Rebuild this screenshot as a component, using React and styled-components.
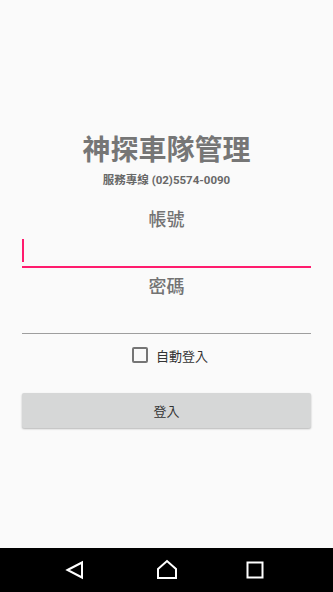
import React from "react";
import styled, { createGlobalStyle } from "styled-components";

const Global = createGlobalStyle`
  html, body { margin: 0; padding: 0; background: #fafafa; }
  body { font-family: Roboto, "Noto Sans CJK TC", "Noto Sans", sans-serif; }
  * { box-sizing: border-box; }
`;

const Screen = styled.div`
  width: 333px;
  height: 592px;
  display: flex;
  flex-direction: column;
  background: #fafafa;
`;

const Main = styled.main`
  flex: 1;
  display: flex;
  flex-direction: column;
  align-items: stretch;
  padding: 134px 22px 0 22px;
`;

const Title = styled.h1`
  margin: 0;
  text-align: center;
  font-family: Roboto, "Noto Sans CJK TC", sans-serif;
  font-size: 28px;
  line-height: 34px;
  font-weight: 700;
  color: #767676;
`;

const Subtitle = styled.div`
  margin-top: 4px;
  text-align: center;
  font-family: Roboto, "Noto Sans CJK TC", sans-serif;
  font-size: 11.5px;
  line-height: 16px;
  font-weight: 700;
  color: #686868;
`;

const Label = styled.div`
  margin-top: ${(p) => p.$top}px;
  text-align: center;
  font-family: Roboto, "Noto Sans CJK TC", sans-serif;
  font-size: 18px;
  line-height: 24px;
  font-weight: 500;
  color: #737373;
`;

const Field = styled.label`
  display: flex;
  align-items: center;
  height: ${(p) => (p.$focused ? 34 : 33)}px;
  margin-top: 2px;
  border-bottom: ${(p) => (p.$focused ? "2px solid #ff1b6d" : "1px solid #9e9e9e")};
`;

const Caret = styled.span`
  width: 2px;
  height: 23px;
  background: #ff1b6d;
  flex: none;
`;

const Input = styled.input`
  flex: 1;
  min-width: 0;
  border: none;
  outline: none;
  background: transparent;
  font-family: Roboto, "Noto Sans CJK TC", sans-serif;
  font-size: 16px;
  color: #333;
  padding: 0 2px;
`;

const CheckRow = styled.label`
  margin-top: 13px;
  padding-left: 7px;
  display: flex;
  align-items: center;
  justify-content: center;
  gap: 8px;
  height: 16px;
  font-family: Roboto, "Noto Sans CJK TC", sans-serif;
  font-size: 13px;
  color: #333;
`;

const Box = styled.span`
  width: 16px;
  height: 16px;
  border: 2px solid #757575;
  border-radius: 2px;
  flex: none;
`;

const Button = styled.button`
  margin-top: 30px;
  height: 35px;
  border: none;
  border-radius: 2px;
  background: #d6d7d7;
  box-shadow: 0 1px 2px rgba(0, 0, 0, 0.28);
  font-family: Roboto, "Noto Sans CJK TC", sans-serif;
  font-size: 13px;
  color: #333;
  padding: 0;
`;

const NavBar = styled.nav`
  height: 44px;
  background: #000;
  display: flex;
  align-items: center;
  justify-content: center;
  gap: 64px;
  flex: none;
`;

const NavIcon = styled.svg`
  width: 24px;
  height: 24px;
  display: block;
  overflow: visible;
`;

export default function App() {
  return (
    <Screen>
      <Global />
      <Main>
        <Title>神探車隊管理</Title>
        <Subtitle>服務專線 (02)5574-0090</Subtitle>
        <Label $top={20}>帳號</Label>
        <Field $focused>
          <Caret />
          <Input type="text" />
        </Field>
        <Label $top={7}>密碼</Label>
        <Field>
          <Input type="password" />
        </Field>
        <CheckRow>
          <Box />
          自動登入
        </CheckRow>
        <Button>登入</Button>
      </Main>
      <NavBar>
        <NavIcon viewBox="0 0 24 24">
          <polygon points="0.5,12 15,4.5 15,19.5" fill="none" stroke="#fff" strokeWidth="2" />
        </NavIcon>
        <NavIcon viewBox="0 0 24 24">
          <polygon points="3,11 12,3 21,11 21,20 3,20" fill="none" stroke="#fff" strokeWidth="2" />
        </NavIcon>
        <NavIcon viewBox="0 0 24 24">
          <rect x="4.5" y="4.5" width="15" height="15" fill="none" stroke="#fff" strokeWidth="2" />
        </NavIcon>
      </NavBar>
    </Screen>
  );
}
